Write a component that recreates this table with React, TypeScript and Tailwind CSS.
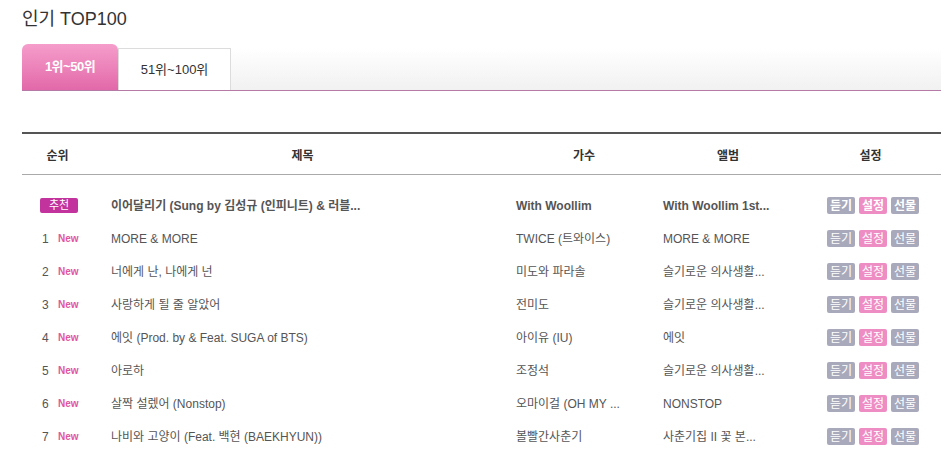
import React from "react";

const rows = [
  { n: "1", title: "MORE & MORE", artist: "TWICE (트와이스)", album: "MORE & MORE" },
  { n: "2", title: "너에게 난, 나에게 넌", artist: "미도와 파라솔", album: "슬기로운 의사생활..." },
  { n: "3", title: "사랑하게 될 줄 알았어", artist: "전미도", album: "슬기로운 의사생활..." },
  { n: "4", title: "에잇 (Prod. by & Feat. SUGA of BTS)", artist: "아이유 (IU)", album: "에잇" },
  { n: "5", title: "아로하", artist: "조정석", album: "슬기로운 의사생활..." },
  { n: "6", title: "살짝 설렜어 (Nonstop)", artist: "오마이걸 (OH MY ...", album: "NONSTOP" },
  { n: "7", title: "나비와 고양이 (Feat. 백현 (BAEKHYUN))", artist: "볼빨간사춘기", album: "사춘기집 II 꽃 본..." },
];

function Buttons() {
  return (
    <div className="flex items-center gap-[4px]">
      <span className="flex h-[17px] w-[28px] items-center justify-center rounded-[2px] bg-[#a9a9bc] text-[12px] leading-none text-white">듣기</span>
      <span className="flex h-[17px] w-[28px] items-center justify-center rounded-[2px] bg-[#ee8dc3] text-[12px] leading-none text-white">설정</span>
      <span className="flex h-[17px] w-[28px] items-center justify-center rounded-[2px] bg-[#a9a9bc] text-[12px] leading-none text-white">선물</span>
    </div>
  );
}

export default function App() {
  return (
    <div
      className="min-h-[456px] bg-white text-[#555]"
      style={{ fontFamily: '"Liberation Sans", "Noto Sans CJK KR", sans-serif' }}
    >
      <div className="ml-[22px] w-[919px]">
        <div className="flex h-[38px] items-center text-[18px] leading-[26px] text-[#333]">인기 TOP100</div>
        <div className="mt-[6px] flex h-[47px] items-end border-b border-[#b57ba6]">
          <div className="flex h-[46px] w-[96px] items-center justify-center rounded-t-[6px] bg-gradient-to-b from-[#f59dcb] to-[#e268a9] text-[13px] font-bold tracking-[-0.5px] text-white">
            1위~50위
          </div>
          <div className="flex h-[42px] w-[113px] items-center justify-center border border-b-0 border-[#dcdcdc] bg-white text-[13px] text-[#333]">
            51위~100위
          </div>
          <div className="h-[42px] flex-1 bg-gradient-to-b from-white to-[#f1f1f1]" />
        </div>

        <div className="mt-[41px] border-t-2 border-[#555]">
          <div className="flex h-[41px] items-center border-b border-[#aaa] pt-[3px] text-[12px] font-bold text-[#333]">
            <div className="w-[71px] text-center">순위</div>
            <div className="w-[419px] text-center">제목</div>
            <div className="w-[144px] text-center">가수</div>
            <div className="w-[144px] text-center">앨범</div>
            <div className="flex-1 text-center">설정</div>
          </div>

          <div className="pt-[14px]">
            <div className="flex h-[33px] items-center text-[12px] font-bold text-[#555]">
              <div className="flex w-[89px] items-center pl-[18px]">
                <span className="flex h-[15px] w-[38px] items-center justify-center rounded-[2px] bg-[#c2339e] text-[11px] font-normal leading-none text-white">추천</span>
              </div>
              <div className="w-[405px] whitespace-nowrap">이어달리기 (Sung by 김성규 (인피니트) &amp; 러블...</div>
              <div className="w-[147px] whitespace-nowrap">With Woollim</div>
              <div className="w-[164px] whitespace-nowrap">With Woollim 1st...</div>
              <Buttons />
            </div>
            {rows.map((r) => (
              <div key={r.n} className="flex h-[33px] items-center text-[12px] text-[#555]">
                <div className="flex w-[89px] items-center pl-[20px]">
                  <span className="w-[16px] text-[12px] text-[#555]">{r.n}</span>
                  <span className="text-[10px] font-bold text-[#e2559f]">New</span>
                </div>
                <div className="w-[405px] whitespace-nowrap">{r.title}</div>
                <div className="w-[147px] whitespace-nowrap">{r.artist}</div>
                <div className="w-[164px] whitespace-nowrap">{r.album}</div>
                <Buttons />
              </div>
            ))}
          </div>
        </div>
      </div>
    </div>
  );
}
